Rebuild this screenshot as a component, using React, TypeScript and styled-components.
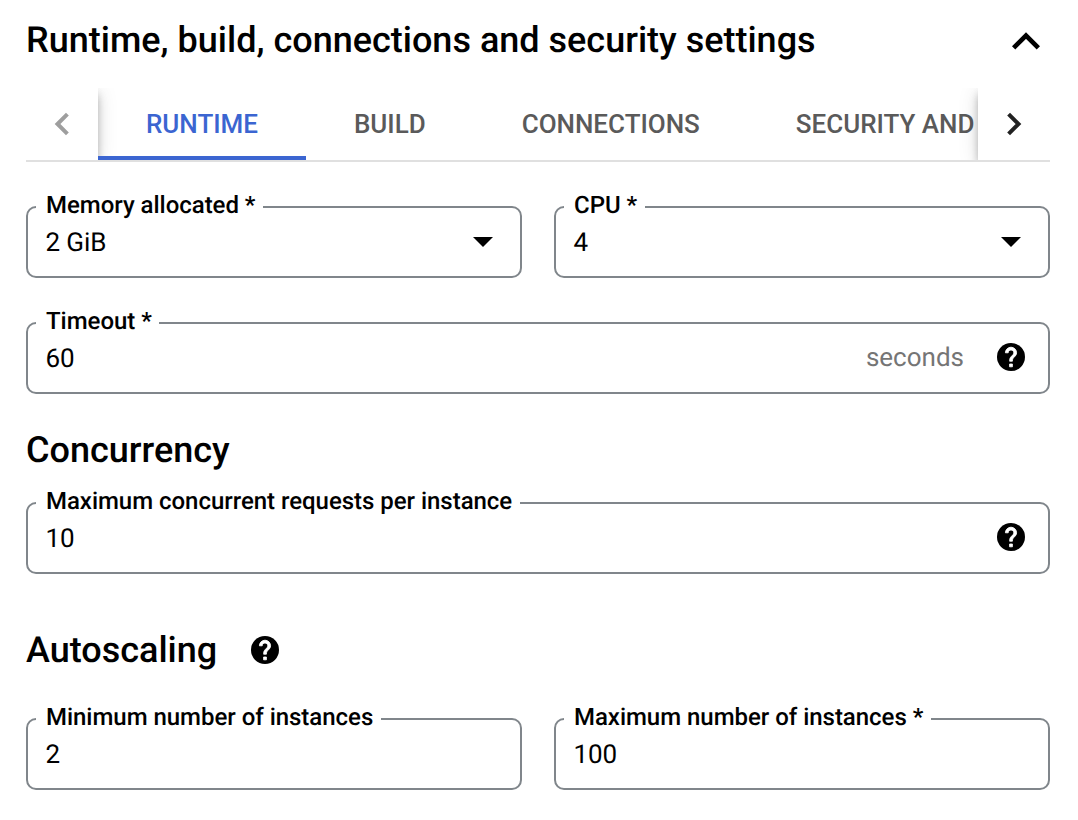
import React from "react";
import styled, { createGlobalStyle } from "styled-components";

const GlobalStyle = createGlobalStyle`
  * { box-sizing: border-box; }
  body {
    margin: 0;
    background: #fff;
    color: #000;
    font-family: Roboto, "Liberation Sans", sans-serif;
    text-rendering: geometricPrecision;
  }
`;

const Panel = styled.main`
  display: flex;
  flex-direction: column;
  width: 1078px;
  height: 820px;
  padding: 16px 28px 0 26px;
  overflow: hidden;
`;

const Header = styled.header`
  display: flex;
  align-items: center;
  justify-content: space-between;
  height: 48px;
  padding-right: 6px;
`;

const Title = styled.h2`
  margin: 0;
  font-size: 36px;
  line-height: 48px;
  font-weight: 500;
  white-space: nowrap;
`;

const TabBar = styled.nav`
  display: flex;
  height: 74px;
  margin-top: 24px;
  border-bottom: 2px solid #e0e0e0;
`;

const Pager = styled.button<{ $side: "left" | "right" }>`
  display: flex;
  align-items: center;
  justify-content: center;
  flex: 0 0 72px;
  padding: 0;
  border: 0;
  background: #fff;
  z-index: 1;
  clip-path: ${(p) => (p.$side === "left" ? "inset(0 -24px 0 0)" : "inset(0 0 0 -24px)")};
  box-shadow: 0 4px 8px -2px rgba(0, 0, 0, 0.2), 0 8px 10px rgba(0, 0, 0, 0.14),
    0 2px 20px rgba(0, 0, 0, 0.12);
`;

const Tabs = styled.div`
  display: flex;
  flex: 1;
  min-width: 0;
  overflow: hidden;
`;

const Tab = styled.button<{ $active?: boolean }>`
  flex: none;
  padding: 4px 48px 0;
  border: 0;
  border-bottom: 4px solid ${(p) => (p.$active ? "#3b65d1" : "transparent")};
  background: none;
  color: ${(p) => (p.$active ? "#3b65d1" : "#5a5a5a")};
  font: 500 26px/64px Roboto, sans-serif;
  letter-spacing: -0.02px;
  white-space: nowrap;
  z-index: ${(p) => (p.$active ? 2 : 0)};
`;

const Row = styled.div<{ $top: number }>`
  display: flex;
  gap: 32px;
  margin-top: ${(p) => p.$top}px;
`;

const Field = styled.fieldset<{ $end?: number }>`
  display: flex;
  align-items: center;
  flex: 1;
  min-width: 0;
  height: 86px;
  margin: 0;
  padding: 0 ${(p) => p.$end ?? 23}px 14px 18px;
  border: 2px solid #80868b;
  border-radius: 10px;
`;

const Label = styled.legend`
  margin-left: -10px;
  padding: 0 7.5px 4px 10px;
  font-size: 24px;
  line-height: 26px;
  font-weight: 500;
  letter-spacing: -0.03px;
  white-space: nowrap;
`;

const Value = styled.span`
  flex: 1;
  margin-left: -0.5px;
  padding-top: 2px;
  font-size: 26px;
  line-height: 32px;
  letter-spacing: -0.1px;
`;

const Trailing = styled.span`
  display: flex;
  align-items: center;
  gap: 33px;
  margin-bottom: 2px;
`;

const Suffix = styled.span`
  padding-top: 2px;
  color: #757575;
  font-size: 26px;
  line-height: 32px;
`;

const Section = styled.h3<{ $top: number }>`
  display: flex;
  align-items: center;
  gap: 34px;
  margin: ${(p) => p.$top}px 0 0;
  font-size: 36px;
  line-height: 48px;
  font-weight: 500;
`;

const Icon = styled.svg`
  display: block;
  flex: none;
`;

const Chevron = ({ d, color = "#000", weight = 4 }: { d: string; color?: string; weight?: number }) => (
  <Icon width="36" height="36" viewBox="0 0 36 36" fill="none" stroke={color} strokeWidth={weight}>
    <path d={d} />
  </Icon>
);

const Help = () => (
  <Icon width="28" height="28" viewBox="2 2 20 20">
    <circle cx="12" cy="12" r="10" fill="#000" />
    <path
      fill="#fff"
      stroke="#fff"
      strokeWidth="0.6"
      d="M13 19h-2v-2h2v2zm2.070-7.750l-.9.920C13.450 12.900 13 13.500 13 15h-2v-.5c0-1.100.450-2.100 1.170-2.830l1.240-1.260c.370-.360.590-.860.590-1.410 0-1.100-.9-2-2-2s-2 .9-2 2H8c0-2.210 1.790-4 4-4s4 1.790 4 4c0 .880-.360 1.680-.930 2.250z"
    />
  </Icon>
);

const Caret = () => (
  <Icon width="20" height="10" viewBox="0 0 20 10">
    <path d="M0 0h20L10 10z" />
  </Icon>
);

export default function App() {
  return (
    <Panel>
      <GlobalStyle />
      <Header>
        <Title>Runtime, build, connections and security settings</Title>
        <Chevron weight={4.67} d="M5.650 25.850L18 13.500L30.350 25.850" />
      </Header>
      <TabBar>
        <Pager $side="left" aria-label="Previous tabs"><Chevron color="#9e9e9e" d="M23.400 8.100L13.500 18L23.400 27.900" /></Pager>
        <Tabs>
          <Tab $active>RUNTIME</Tab>
          <Tab>BUILD</Tab>
          <Tab>CONNECTIONS</Tab>
          <Tab>SECURITY AND</Tab>
        </Tabs>
        <Pager $side="right" aria-label="Next tabs"><Chevron color="#212121" d="M12.600 8.100L22.500 18L12.600 27.900" /></Pager>
      </TabBar>
      <Row $top={30}>
        <Field $end={27}><Label>Memory allocated *</Label><Value>2 GiB</Value><Caret /></Field>
        <Field $end={27}><Label>CPU *</Label><Value>4</Value><Caret /></Field>
      </Row>
      <Row $top={30}>
        <Field><Label>Timeout *</Label><Value>60</Value><Trailing><Suffix>seconds</Suffix><Help /></Trailing></Field>
      </Row>
      <Section $top={32}>Concurrency</Section>
      <Row $top={14}>
        <Field><Label>Maximum concurrent requests per instance</Label><Value>10</Value><Trailing><Help /></Trailing></Field>
      </Row>
      <Section $top={52}>Autoscaling<Help /></Section>
      <Row $top={30}>
        <Field><Label>Minimum number of instances</Label><Value>2</Value></Field>
        <Field><Label>Maximum number of instances *</Label><Value>100</Value></Field>
      </Row>
    </Panel>
  );
}
